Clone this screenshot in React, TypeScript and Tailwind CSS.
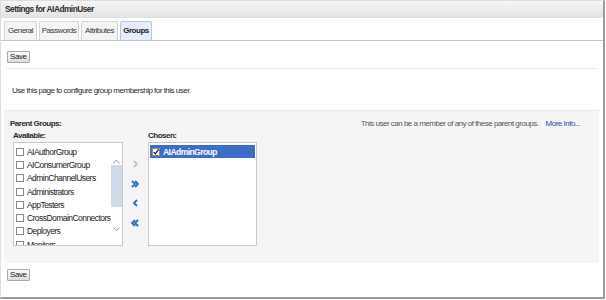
import React from "react";

const available = [
  "AIAuthorGroup",
  "AIConsumerGroup",
  "AdminChannelUsers",
  "Administrators",
  "AppTesters",
  "CrossDomainConnectors",
  "Deployers",
  "Monitors",
];

const tabs = [
  { label: "General", w: "w-[33px]" },
  { label: "Passwords", w: "w-[40px]" },
  { label: "Attributes", w: "w-[37px]" },
  { label: "Groups", w: "w-[32px]", active: true },
];

function Chevron({ dir, double, color }: { dir: "left" | "right"; double?: boolean; color: string }) {
  const one = dir === "right" ? "M1 1 L4 4 L1 7" : "M4 1 L1 4 L4 7";
  const two = dir === "right" ? "M4 1 L7 4 L4 7" : "M7 1 L4 4 L7 7";
  return (
    <svg width="9" height="8" viewBox="0 0 9 8" fill="none" className="block">
      <g transform={double ? "" : "translate(2 0)"}>
        <path d={one} stroke={color} strokeWidth="1.8" strokeLinejoin="round" />
        {double && <path d={two} stroke={color} strokeWidth="1.8" strokeLinejoin="round" />}
      </g>
    </svg>
  );
}

function SaveButton() {
  return (
    <button className="h-[12px] px-[2px] text-[8px] tracking-[-0.4px] leading-none text-[#222] border border-[#a9a9a9] rounded-[1px] bg-gradient-to-b from-[#fbfbfb] to-[#dcdcdc]">
      Save
    </button>
  );
}

function Checkbox({ checked }: { checked?: boolean }) {
  return (
    <span className="w-[8px] h-[8px] shrink-0 border border-[#8a8a8a] bg-white flex items-center justify-center">
      {checked && (
        <svg width="8" height="8" viewBox="0 0 8 8">
          <path d="M1 4 L3 6.5 L7.5 0.5" stroke="#111" strokeWidth="1.6" fill="none" />
        </svg>
      )}
    </span>
  );
}

export default function App() {
  return (
    <div
      className="w-[606px] h-[300px] bg-white text-[#2a2a2a] text-[8px] leading-[10px] tracking-[-0.5px]"
      style={{ fontFamily: '"Liberation Sans", Arial, sans-serif' }}
    >
      <div className="w-[605px] h-[299px] border-t border-l border-[#dedede] border-r-2 border-r-[#9a9a9a] border-b-2 border-b-[#9a9a9a] flex flex-col">
        {/* Title bar */}
        <div className="h-[17px] shrink-0 flex items-center px-[4px] bg-gradient-to-b from-[#f6f6f6] to-[#e4e4e4] border-b border-[#e0e0e0]">
          <span className="text-[8.3px] font-bold text-[#2a2a2a]">Settings for AIAdminUser</span>
        </div>

        {/* Tabs */}
        <div className="mt-[3px] h-[20px] shrink-0 flex items-end gap-[2px] pl-[3px] border-b border-[#b7c8da]">
          {tabs.map((t) => (
            <div
              key={t.label}
              className={`${t.w} h-[19px] flex items-center justify-center rounded-t-[2px] border border-b-0 ${
                t.active
                  ? "bg-[#e5eef8] border-[#b7c8da] font-bold text-[#1f1f1f]"
                  : "bg-[#f4f4f4] border-[#d6d6d6] text-[#3a3a3a]"
              }`}
            >
              {t.label}
            </div>
          ))}
        </div>

        <div className="flex pl-[6px] mt-[10px]">
          <SaveButton />
        </div>

        <div className="mt-[5px] mx-[5px] h-px bg-[#ececec]" />

        <p className="mt-[17px] pl-[11px]">
          Use this page to configure group membership for this user.
        </p>

        <div className="mt-[14px] mx-[3px] h-px bg-[#ececec]" />

        {/* Parent groups panel */}
        <div className="ml-[3px] mr-[4px] h-[152px] bg-[#f5f5f5] flex flex-col">
          <div className="mt-[8px] flex items-center justify-between pl-[6px] pr-[19px] h-[10px]">
            <span className="font-bold">Parent Groups:</span>
            <span className="text-[#555]">
              This user can be a member of any of these parent groups.
              <span className="ml-[7px] text-[#2f4f9e]">More Info...</span>
            </span>
          </div>

          <div className="flex">
            {/* Available */}
            <div className="ml-[9px] flex flex-col">
              <span className="h-[13px] flex items-center font-bold">Available:</span>
              <div className="w-[110px] h-[104px] border border-[#c9c9c9] bg-white flex overflow-hidden">
                <div className="flex-1 pt-[2px] pl-[2px] overflow-hidden">
                  {available.map((a) => (
                    <div key={a} className="h-[13.3px] flex items-center gap-[3px]">
                      <Checkbox />
                      <span className="text-[8.5px] tracking-[-0.55px] text-[#1a1a1a] whitespace-nowrap">{a}</span>
                    </div>
                  ))}
                </div>
                <div className="w-[11px] flex flex-col items-center">
                  <div className="h-[14px]" />
                  <span className="h-[8px] flex items-center">
                    <svg width="7" height="5" viewBox="0 0 7 5">
                      <path d="M0.5 4.5 L3.5 1 L6.5 4.5" stroke="#8a9bb0" strokeWidth="1" fill="none" />
                    </svg>
                  </span>
                  <div className="w-full h-[42px] bg-[#cfdbe8]" />
                  <div className="h-[18px]" />
                  <span className="h-[8px] flex items-center">
                    <svg width="7" height="5" viewBox="0 0 7 5">
                      <path d="M0.5 0.5 L3.5 4 L6.5 0.5" stroke="#8a9bb0" strokeWidth="1" fill="none" />
                    </svg>
                  </span>
                </div>
              </div>
            </div>

            {/* Shuttle buttons */}
            <div className="w-[25px] flex flex-col items-center pt-[31px] gap-[11.5px]">
              <Chevron dir="right" color="#c4c4c4" />
              <Chevron dir="right" double color="#2d6cc4" />
              <Chevron dir="left" color="#2d6cc4" />
              <Chevron dir="left" double color="#2d6cc4" />
            </div>

            {/* Chosen */}
            <div className="flex flex-col">
              <span className="h-[13px] flex items-center font-bold">Chosen:</span>
              <div className="w-[109px] h-[104px] border border-[#c9c9c9] bg-white p-[1px] pt-[2px]">
                <div className="h-[13px] bg-[#3b6ec6] flex items-center gap-[3px] pl-[2px]">
                  <Checkbox checked />
                  <span className="text-[8.5px] tracking-[-0.55px] font-bold text-white">AIAdminGroup</span>
                </div>
              </div>
            </div>
          </div>
        </div>

        <div className="flex pl-[6px] mt-[6px]">
          <SaveButton />
        </div>
      </div>
    </div>
  );
}
